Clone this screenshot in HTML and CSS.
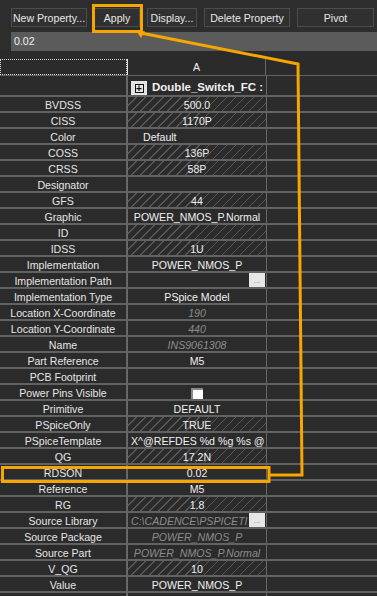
FILE: index.html
```html
<!DOCTYPE html>
<html lang="en">
<head>
    <meta charset="UTF-8">
    <meta name="viewport" content="width=device-width, initial-scale=1.0">
    <title>Property Editor</title>
    <link rel="stylesheet" href="styles.css">
</head>
<body>
    <div class="toolbar">
        <div class="buttons">
            <button class="btn btn-new">New Property...</button>
            <button class="btn btn-apply">Apply</button>
            <button class="btn btn-display">Display...</button>
            <button class="btn btn-delete">Delete Property</button>
            <button class="btn btn-pivot">Pivot</button>
        </div>
        <div class="edit">0.02</div>
    </div>

    <div class="grid">
        <div class="row head">
            <div class="name corner"></div>
            <div class="val">A</div>
        </div>
        <div class="row group">
            <div class="name"></div>
            <div class="val"><span class="plus"><span class="plus-box">+</span></span><b>Double_Switch_FC :</b></div>
        </div>
        <div class="row"><div class="name">BVDSS</div><div class="val hatch">500.0</div></div>
        <div class="row"><div class="name">CISS</div><div class="val hatch">1170P</div></div>
        <div class="row"><div class="name">Color</div><div class="val left">Default</div></div>
        <div class="row"><div class="name">COSS</div><div class="val hatch">136P</div></div>
        <div class="row"><div class="name">CRSS</div><div class="val hatch">58P</div></div>
        <div class="row"><div class="name">Designator</div><div class="val"></div></div>
        <div class="row"><div class="name">GFS</div><div class="val hatch">44</div></div>
        <div class="row"><div class="name">Graphic</div><div class="val">POWER_NMOS_P.Normal</div></div>
        <div class="row"><div class="name">ID</div><div class="val hatch"></div></div>
        <div class="row"><div class="name">IDSS</div><div class="val hatch">1U</div></div>
        <div class="row"><div class="name">Implementation</div><div class="val">POWER_NMOS_P</div></div>
        <div class="row"><div class="name">Implementation Path</div><div class="val with-btn"><span class="txt"></span><span class="dots">...</span></div></div>
        <div class="row"><div class="name">Implementation Type</div><div class="val">PSpice Model</div></div>
        <div class="row"><div class="name">Location X-Coordinate</div><div class="val dim">190</div></div>
        <div class="row"><div class="name">Location Y-Coordinate</div><div class="val dim">440</div></div>
        <div class="row"><div class="name">Name</div><div class="val dim">INS9061308</div></div>
        <div class="row"><div class="name">Part Reference</div><div class="val">M5</div></div>
        <div class="row"><div class="name">PCB Footprint</div><div class="val"></div></div>
        <div class="row"><div class="name">Power Pins Visible</div><div class="val"><span class="check"></span></div></div>
        <div class="row"><div class="name">Primitive</div><div class="val">DEFAULT</div></div>
        <div class="row"><div class="name">PSpiceOnly</div><div class="val hatch">TRUE</div></div>
        <div class="row"><div class="name">PSpiceTemplate</div><div class="val left clip">X^@REFDES %d %g %s @</div></div>
        <div class="row"><div class="name">QG</div><div class="val hatch">17.2N</div></div>
        <div class="row"><div class="name">RDSON</div><div class="val">0.02</div></div>
        <div class="row"><div class="name">Reference</div><div class="val">M5</div></div>
        <div class="row"><div class="name">RG</div><div class="val hatch">1.8</div></div>
        <div class="row"><div class="name">Source Library</div><div class="val with-btn dim"><span class="txt">C:\CADENCE\PSPICETI</span><span class="dots">...</span></div></div>
        <div class="row"><div class="name">Source Package</div><div class="val dim">POWER_NMOS_P</div></div>
        <div class="row"><div class="name">Source Part</div><div class="val dim">POWER_NMOS_P.Normal</div></div>
        <div class="row"><div class="name">V_QG</div><div class="val hatch">10</div></div>
        <div class="row"><div class="name">Value</div><div class="val">POWER_NMOS_P</div></div>
        <div class="row"><div class="name"></div><div class="val"></div></div>
    </div>

    <!-- callout drawn over the editor -->
    <svg class="callout" width="377" height="596" viewBox="0 0 377 596">
        <rect x="93.5" y="5.5" width="48" height="26" fill="none" stroke="#f7a600" stroke-width="3"/>
        <polyline points="141,33 298,64 302,475 270,475" fill="none" stroke="#f7a600" stroke-width="3" stroke-linejoin="miter"/>
        <polygon points="137,32 145,31 141,38" fill="#f7a600"/>
        <rect x="2.5" y="467.5" width="266.5" height="14" fill="none" stroke="#f7a600" stroke-width="3"/>
    </svg>
</body>
</html>
```

FILE: styles.css
```css
body {
    margin: 0;
    width: 377px;
    height: 596px;
    overflow: hidden;
    position: relative;
    background-color: #2b2b2b;
    color: #e6e6e6;
    font-family: "Liberation Sans", Arial, sans-serif;
    font-size: 10.6px;
}
.toolbar {
    padding: 8px 0 0 11px;
    height: 50px;
    box-sizing: border-box;
    background-color: #2d2d2d;
}
.buttons {
    display: flex;
    gap: 7px;
}
.btn {
    height: 19px;
    padding: 0;
    background-color: #303030;
    color: #e8e8e8;
    border: 1px solid #4c4c4c;
    font-family: inherit;
    font-size: 10.6px;
}
.btn-new { width: 76px; }
.btn-apply { width: 46px; }
.btn-display { width: 50px; }
.btn-delete { width: 86px; }
.btn-pivot { width: 77px; }
.edit {
    margin-top: 5px;
    height: 19px;
    line-height: 19px;
    padding-left: 3px;
    background-color: #5b5b5b;
    color: #f0f0f0;
}
.grid {
    margin-top: 9px;
}
.row {
    display: flex;
    height: 14px;
    border-bottom: 2px solid #626262;
    line-height: 16px;
}
.name {
    width: 126px;
    flex: none;
    border-right: 2px solid #686868;
    text-align: center;
    white-space: nowrap;
    overflow: hidden;
}
.val {
    width: 138px;
    flex: none;
    border-right: 1px solid #686868;
    text-align: center;
    white-space: nowrap;
    overflow: hidden;
    color: #f0f0f0;
}
.head {
    height: 16px;
    line-height: 17px;
    border-bottom-width: 1px;
}
.head .corner {
    border: 1px dotted #d8d8d8;
    width: 125px;
    height: 14px;
}
.head .val {
    border-left: 1px solid #e0e0e0;
    width: 137px;
}
.group {
    height: 19px;
}
.group .val {
    display: flex;
    align-items: flex-start;
    text-align: left;
}
.group b {
    margin: 5px 0 0 5px;
    font-size: 11.5px;
    line-height: 12px;
}
.plus {
    width: 16px;
    height: 15px;
    margin: 5px 0 0 3px;
    background-color: #e4e4e4;
    display: flex;
    align-items: center;
    justify-content: center;
}
.plus-box {
    width: 7px;
    height: 7px;
    border: 1px solid #111;
    color: #111;
    font-size: 10px;
    line-height: 7px;
    text-align: center;
    font-weight: bold;
}
.hatch {
    background: repeating-linear-gradient(135deg, transparent 0 5.4px, #585858 5.4px 6.4px);
}
.left {
    text-align: left;
    padding-left: 15px;
    width: 123px;
}
.clip {
    padding-left: 3px;
    width: 135px;
}
.dim {
    color: #8d8d8d;
    font-style: italic;
}
.with-btn {
    display: flex;
    justify-content: space-between;
    text-align: left;
}
.with-btn .txt {
    padding-left: 3px;
    overflow: hidden;
}
.dots {
    flex: none;
    width: 16px;
    height: 14px;
    margin-right: 1px;
    background-color: #e6e6e6;
    color: #777;
    font-style: normal;
    font-size: 8px;
    line-height: 16px;
    text-align: center;
}
.check {
    display: inline-block;
    width: 10px;
    height: 10px;
    margin-top: 3px;
    background-color: #fff;
    border-top: 2px solid #8a8a8a;
    border-left: 2px solid #8a8a8a;
    vertical-align: top;
}
.callout {
    position: absolute;
    left: 0;
    top: 0;
    pointer-events: none;
}
```
